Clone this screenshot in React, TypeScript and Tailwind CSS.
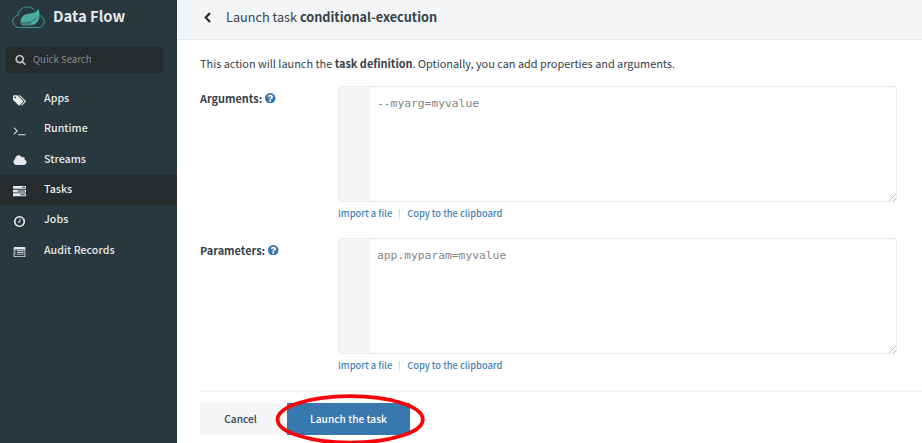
import type { ReactNode } from "react";

const icons = {
  search: {
    box: "0 0 1792 1792",
    d: "M1216 832q0-185-131.5-316.5t-316.5-131.5-316.5 131.5-131.5 316.5 131.5 316.5 316.5 131.5 316.5-131.5 131.5-316.5zm512 832q0 52-38 90t-90 38q-54 0-90-38l-343-342q-179 124-399 124-143 0-273.5-55.5t-225-150-150-225-55.5-273.5 55.5-273.5 150-225 225-150 273.5-55.5 273.5 55.5 225 150 150 225 55.5 273.5q0 220-124 399l343 343q37 37 37 90z",
  },
  tags: {
    box: "0 0 1920 1792",
    d: "M448 448q0-53-37.5-90.5t-90.5-37.5-90.5 37.5-37.5 90.5 37.5 90.5 90.5 37.5 90.5-37.5 37.5-90.5zm1067 576q0 53-37 90l-491 492q-39 37-91 37-53 0-90-37l-715-716q-38-37-64.5-101t-26.5-117v-416q0-52 38-90t90-38h416q53 0 117 26.5t102 64.5l715 714q37 39 37 91zm384 0q0 53-37 90l-491 492q-39 37-91 37-36 0-59-14t-53-45l470-470q37-37 37-90 0-52-37-91l-715-714q-38-38-102-64.5t-117-26.5h224q53 0 117 26.5t102 64.5l715 714q37 39 37 91z",
  },
  terminal: {
    box: "0 0 1792 1792",
    d: "M649 983l-466 466q-10 10-23 10t-23-10l-50-50q-10-10-10-23t10-23l393-393-393-393q-10-10-10-23t10-23l50-50q10-10 23-10t23 10l466 466q10 10 10 23t-10 23zm1079 457v64q0 14-9 23t-23 9h-960q-14 0-23-9t-9-23v-64q0-14 9-23t23-9h960q14 0 23 9t9 23z",
  },
  cloud: {
    box: "0 0 2048 1792",
    d: "M1984 1152q0 159-112.5 271.5t-271.5 112.5h-1088q-185 0-316.5-131.5t-131.5-316.5q0-132 71-241.5t187-163.5q-2-28-2-43 0-212 150-362t362-150q158 0 286.5 88t187.5 230q70-62 166-62 106 0 181 75t75 181q0 75-41 138 129 30 213 134.5t84 239.5z",
  },
  tasks: {
    box: "0 0 1792 1792",
    d: "M1024 1408h640v-128h-640v128zm-384-512h1024v-128h-1024v128zm640-512h384v-128h-384v128zm512 832v256q0 26-19 45t-45 19h-1664q-26 0-45-19t-19-45v-256q0-26 19-45t45-19h1664q26 0 45 19t19 45zm0-512v256q0 26-19 45t-45 19h-1664q-26 0-45-19t-19-45v-256q0-26 19-45t45-19h1664q26 0 45 19t19 45zm0-512v256q0 26-19 45t-45 19h-1664q-26 0-45-19t-19-45v-256q0-26 19-45t45-19h1664q26 0 45 19t19 45z",
  },
  clock: {
    box: "0 0 1792 1792",
    d: "M1024 544v448q0 14-9 23t-23 9h-320q-14 0-23-9t-9-23v-64q0-14 9-23t23-9h224v-352q0-14 9-23t23-9h64q14 0 23 9t9 23zm416 352q0-148-73-273t-198-198-273-73-273 73-198 198-73 273 73 273 198 198 273 73 273-73 198-198 73-273zm224 0q0 209-103 385.5t-279.5 279.5-385.5 103-385.5-103-279.5-279.5-103-385.5 103-385.5 279.5-279.5 385.5-103 385.5 103 279.5 279.5 103 385.5z",
  },
  list: {
    box: "0 0 1792 1536",
    d: "M0 160q0-66 47-113t113-47h1472q66 0 113 47t47 113v1216q0 66-47 113t-113 47H160q-66 0-113-47T0 1376zM128 384v992q0 32 32 32h1472q32 0 32-32V384zM256 512h128v128H256zM512 512h1024v128H512zM256 768h128v128H256zM512 768h1024v128H512zM256 1024h128v128H256zM512 1024h1024v128H512z",
  },
  question: {
    box: "128 128 1536 1536",
    d: "M1024 1376v-192q0-14-9-23t-23-9h-192q-14 0-23 9t-9 23v192q0 14 9 23t23 9h192q14 0 23-9t9-23zm256-672q0-88-55.5-163t-138.5-116-170-41q-243 0-371 213-15 24 8 42l132 100q7 6 19 6 16 0 25-12 53-68 86-92 34-24 86-24 48 0 85.5 26t37.5 59q0 38-20 61t-68 45q-63 28-115.5 86.5t-52.5 125.5v36q0 14 9 23t23 9h192q14 0 23-9t9-23q0-19 21.5-49.5t54.5-49.5q32-18 49-28.5t46-35 44.5-48 28-60.5 12.5-81zm384 192q0 209-103 385.5t-279.5 279.5-385.5 103-385.5-103-279.5-279.5-103-385.5 103-385.5 279.5-279.5 385.5-103 385.5 103 279.5 279.5 103 385.5z",
  },
};

type IconName = keyof typeof icons;

function Icon({ name, className }: { name: IconName; className: string }) {
  return (
    <svg viewBox={icons[name].box} className={className} fill="currentColor" fillRule="evenodd">
      <path d={icons[name].d} />
    </svg>
  );
}

function Logo() {
  return (
    <svg viewBox="0 0 33 23" className="h-[23px] w-[33px] shrink-0" fill="none">
      <path
        d="M26 21.600H8C3.600 21.600 .8 18.900 .8 15.400C.8 12 3.200 9.700 6.300 9.200C6.400 4.300 10.300 .9 15.200 .9C18.300 .9 20.800 2.100 22.500 4.300M27.800 9.500C30.300 10 32.200 12.500 32.200 15.400C32.200 18.900 29.500 21.600 26 21.600"
        stroke="#3f9d94"
        strokeWidth="1"
      />
      <path
        d="M26.400 2.800C28.200 8 28 13.500 24.600 16.700C21.800 19.300 17 20 9.800 19.600C8 16.500 8.200 12.700 10.800 10.200C14.200 6.900 19 8.300 22.800 6.300C24.600 5.300 25.600 4.300 26.400 2.800Z"
        fill="#4aaba1"
      />
      <path d="M9 16.800C15.500 17.300 21.500 15.500 25 11" stroke="#29373f" strokeWidth=".5" />
      <path d="M10.500 17v3M13 17v3M15.500 16.500v3M18 16v3" stroke="#29373f" strokeWidth=".8" />
    </svg>
  );
}

const nav: { label: string; icon: IconName; size: string }[] = [
  { label: "Apps", icon: "tags", size: "w-[13px] h-[13px]" },
  { label: "Runtime", icon: "terminal", size: "w-[13px] h-[13px]" },
  { label: "Streams", icon: "cloud", size: "w-[14px] h-[13px]" },
  { label: "Tasks", icon: "tasks", size: "w-[13px] h-[13px]" },
  { label: "Jobs", icon: "clock", size: "w-[13px] h-[13px]" },
  { label: "Audit Records", icon: "list", size: "w-[13px] h-[10px]" },
];

function Field({ label, placeholder }: { label: ReactNode; placeholder: string }) {
  return (
    <div className="flex h-[152px]">
      <div className="flex h-6 w-[138px] items-center gap-[3px] text-[10.9px] font-bold">
        <span>{label}</span>
        <Icon name="question" className="h-[10.5px] w-[10.5px] text-[#3878ae]" />
      </div>
      <div className="w-[559px]">
        <div className="relative flex h-[116px] overflow-hidden rounded-[3px] border border-[#e9ebec]">
          <div className="w-[31px] bg-[#f4f5f7]" />
          <div className="pt-[8px] pl-[7px] font-['DejaVu_Sans_Mono',monospace] text-[11.3px] leading-[18px] text-[#858585]">
            {placeholder}
          </div>
          <svg viewBox="0 0 7 7" className="absolute right-0 bottom-0 h-[7px] w-[7px]" stroke="#aaa" strokeWidth=".9">
            <path d="M0 7L7 0M4 7L7 4" />
          </svg>
        </div>
        <div className="flex h-[24px] items-center text-[9.3px] font-medium text-[#4583b5]">
          <span>Import a file</span>
          <span className="mx-[7px] h-[10px] w-px bg-[#dcdcdc]" />
          <span>Copy to the clipboard</span>
        </div>
      </div>
    </div>
  );
}

export default function App() {
  return (
    <div className="relative flex h-[443px] w-[922px] overflow-hidden bg-white font-['Noto_Sans_CJK_SC',sans-serif] text-[#34424a]">
      <aside className="w-[177px] shrink-0 bg-[#29373f] text-[#e6e9ea]">
        <div className="flex h-[35px] items-center pl-[12px]">
          <Logo />
          <span className="ml-[8px] pb-[3px] text-[14.8px] leading-[20px] font-bold">Data Flow</span>
        </div>
        <div className="mt-[12px] ml-[6px] flex h-[26px] w-[157px] items-center rounded-[3px] bg-[#262b2e] pl-[9px] text-[#8b8f91]">
          <Icon name="search" className="mb-px h-[11px] w-[11px] text-[#c3c6c7]" />
          <span className="ml-[7px] pb-[1px] text-[9.6px]">Quick Search</span>
        </div>
        <nav className="mt-[11px]">
          {nav.map((n) => (
            <div
              key={n.label}
              className={`flex h-[30.3px] items-center pl-[13px] ${n.label === "Tasks" ? "bg-[#262b2e]" : ""}`}
            >
              <span className="flex w-[31px] pt-[2px]">
                <Icon name={n.icon} className={n.size} />
              </span>
              <span className="pb-[2px] text-[10.7px] leading-[16px] font-medium">{n.label}</span>
            </div>
          ))}
        </nav>
      </aside>
      <main className="min-w-0 flex-1">
        <header className="flex h-[40px] items-center border-b border-[#e6e8ea] bg-[#f4f5f7] pb-[5px] pl-[27px]">
          <svg viewBox="0 0 7 11" className="h-[11px] w-[7px]" fill="none" stroke="#252b2e" strokeWidth="2.200">
            <path d="M6 1L1.700 5.500L6 10" />
          </svg>
          <h1 className="ml-[15px] text-[12.7px] leading-[20px] whitespace-pre">
            Launch task <b>conditional-execution</b>
          </h1>
        </header>
        <div className="pl-[23px]">
          <p className="pt-[13px] text-[10.9px] leading-[20px] whitespace-pre">
            This action will launch the <b>task definition</b>. Optionally, you can add properties and arguments.
          </p>
          <div className="pt-[13px]">
            <Field label="Arguments:" placeholder="--myarg=myvalue" />
            <Field label="Parameters:" placeholder="app.myparam=myvalue" />
          </div>
          <div className="flex gap-[6px] border-t-2 border-[#f3f4f5] pt-[11px]">
            <button className="h-[32px] w-[81px] bg-[#f4f5f7] pb-[1px] text-[10.2px] font-medium">Cancel</button>
            <button className="h-[32px] w-[123px] bg-[#3878ae] pb-[1px] text-[10.2px] font-medium text-white">
              Launch the task
            </button>
          </div>
        </div>
      </main>
      <svg viewBox="0 0 150 50" className="absolute top-[393px] left-[275px] h-[50px] w-[150px]" fill="none">
        <ellipse cx="75.2" cy="26.400" rx="72.600" ry="23.200" stroke="#fb0007" strokeWidth="3.800" />
      </svg>
    </div>
  );
}
